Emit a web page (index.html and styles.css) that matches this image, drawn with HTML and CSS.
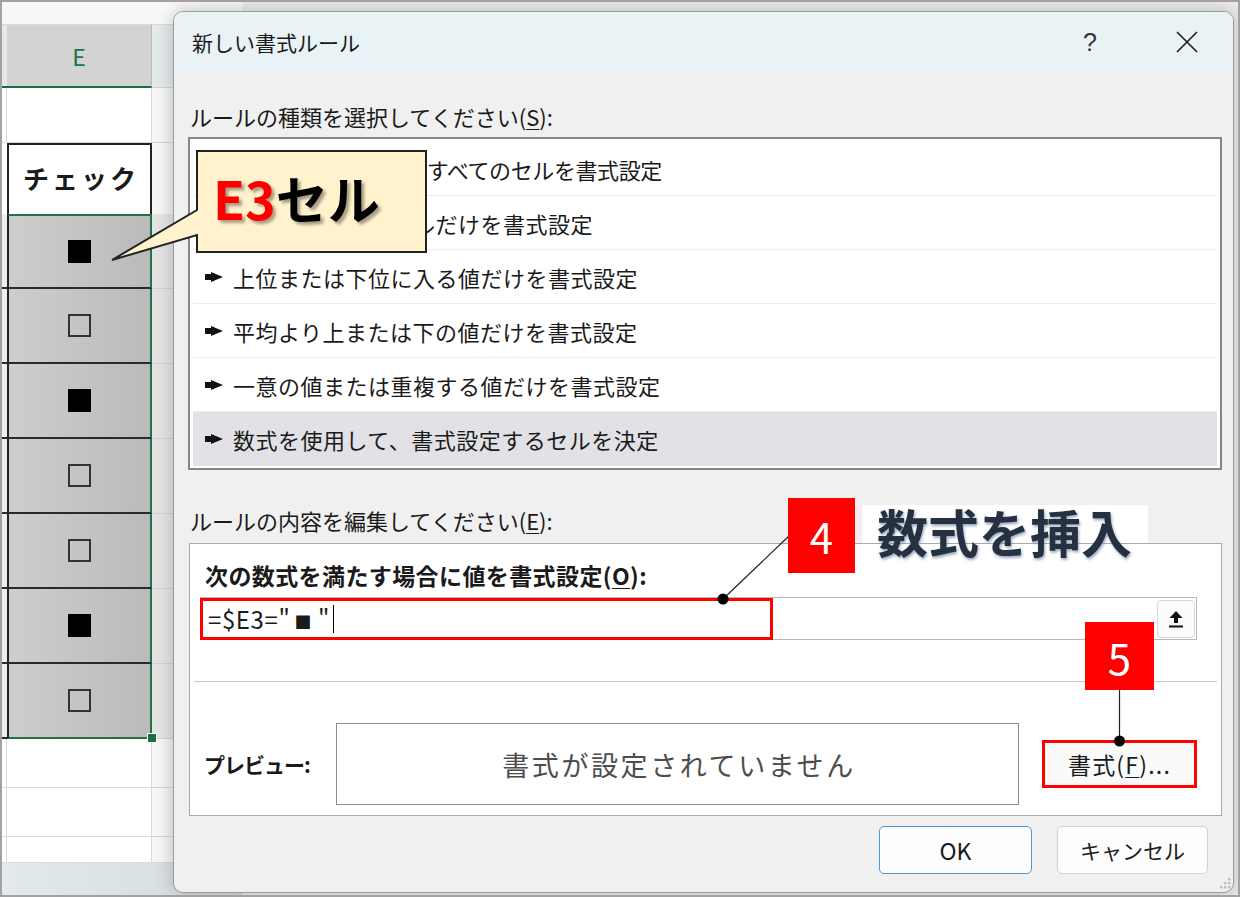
FILE: index.html
```html
<!DOCTYPE html>
<html lang="ja">
<head>
    <meta charset="UTF-8" />
    <title>新しい書式ルール</title>
    <link rel="stylesheet" href="styles.css">
</head>
<body>
<div class="frame">
    <div class="sheet">
        <div class="row top"><div class="stub"></div><div class="cell"></div><div class="next"></div></div>
        <div class="row head"><div class="stub"></div><div class="cell">E</div><div class="next"></div></div>
        <div class="row blank r1"><div class="stub"></div><div class="cell"></div><div class="next"></div></div>
        <div class="row r2"><div class="stub"></div><div class="cell">チェック</div><div class="next"></div></div>
        <div class="row mark first"><div class="stub"></div><div class="cell"><span class="chk on"></span></div><div class="next"></div></div>
        <div class="row mark"><div class="stub"></div><div class="cell"><span class="chk off"></span></div><div class="next"></div></div>
        <div class="row mark"><div class="stub"></div><div class="cell"><span class="chk on"></span></div><div class="next"></div></div>
        <div class="row mark"><div class="stub"></div><div class="cell"><span class="chk off"></span></div><div class="next"></div></div>
        <div class="row mark"><div class="stub"></div><div class="cell"><span class="chk off"></span></div><div class="next"></div></div>
        <div class="row mark"><div class="stub"></div><div class="cell"><span class="chk on"></span></div><div class="next"></div></div>
        <div class="row mark last"><div class="stub"></div><div class="cell"><span class="chk off"></span></div><div class="next"></div></div>
        <div class="row blank r10"><div class="stub"></div><div class="cell"></div><div class="next"></div></div>
        <div class="row blank r11"><div class="stub"></div><div class="cell"></div><div class="next"></div></div>
        <div class="row blank r12"><div class="stub"></div><div class="cell"></div><div class="next"></div></div>
        <div class="row foot"></div>
    </div>
    <div class="handle"></div>

    <div class="dialog">
        <div class="titlebar">
            <div class="title">新しい書式ルール</div>
            <div class="help">?</div>
            <div class="close">
                <svg width="22" height="22" viewBox="0 0 22 22"><path d="M1 1L21 21M21 1L1 21" stroke="#222" stroke-width="1.7"/></svg>
            </div>
        </div>
        <div class="body">
            <div class="label">ルールの種類を選択してください(<u>S</u>):</div>
            <div class="rules">
                <div class="rule tight"><svg class="pt" width="18" height="10" viewBox="0 0 18 10"><polygon points="0,2 6,2 6,0 18,5 6,10 6,8 0,8"/></svg>セルの値に基づいてすべてのセルを書式設定</div>
                <div class="rule"><svg class="pt" width="18" height="10" viewBox="0 0 18 10"><polygon points="0,2 6,2 6,0 18,5 6,10 6,8 0,8"/></svg>指定の値を含むセルだけを書式設定</div>
                <div class="rule"><svg class="pt" width="18" height="10" viewBox="0 0 18 10"><polygon points="0,2 6,2 6,0 18,5 6,10 6,8 0,8"/></svg>上位または下位に入る値だけを書式設定</div>
                <div class="rule"><svg class="pt" width="18" height="10" viewBox="0 0 18 10"><polygon points="0,2 6,2 6,0 18,5 6,10 6,8 0,8"/></svg>平均より上または下の値だけを書式設定</div>
                <div class="rule"><svg class="pt" width="18" height="10" viewBox="0 0 18 10"><polygon points="0,2 6,2 6,0 18,5 6,10 6,8 0,8"/></svg>一意の値または重複する値だけを書式設定</div>
                <div class="rule active"><svg class="pt" width="18" height="10" viewBox="0 0 18 10"><polygon points="0,2 6,2 6,0 18,5 6,10 6,8 0,8"/></svg>数式を使用して、書式設定するセルを決定</div>
            </div>
            <div class="label gap">ルールの内容を編集してください(<u>E</u>):</div>
            <div class="editor">
                <div class="sub">次の数式を満たす場合に値を書式設定(<u>O</u>):</div>
                <div class="formula">
                    <span class="ftext">=$E3="<span class="sq">■</span>"</span><span class="caret"></span>
                    <div class="refbtn">
                        <svg width="16" height="18" viewBox="0 0 16 18"><path d="M8 1L14.5 8H10V13H6V8H1.5Z" fill="#111"/><rect x="1" y="15.5" width="14" height="2" fill="#111"/></svg>
                    </div>
                </div>
                <div class="sep"></div>
                <div class="preview">
                    <div class="plabel">プレビュー:</div>
                    <div class="pbox">書式が設定されていません</div>
                    <div class="fmtbtn">書式(<u>F</u>)...</div>
                </div>
            </div>
            <div class="actions">
                <div class="btn ok">OK</div>
                <div class="btn">キャンセル</div>
            </div>
        </div>
        <svg class="grip" width="14" height="14" viewBox="0 0 14 14">
            <rect x="11" y="3" width="2.5" height="2.5"/><rect x="11" y="7" width="2.5" height="2.5"/><rect x="7" y="7" width="2.5" height="2.5"/>
            <rect x="11" y="11" width="2.5" height="2.5"/><rect x="7" y="11" width="2.5" height="2.5"/><rect x="3" y="11" width="2.5" height="2.5"/>
        </svg>
    </div>

    <svg class="marks" width="1236" height="893" viewBox="2 2 1236 893">
        <path d="M197 151H426V252H197V235L112 260L197 210Z" fill="#fff2cc" stroke="#222" stroke-width="2"/>
        <line x1="723" y1="599" x2="789" y2="536" stroke="#222" stroke-width="1.2"/>
        <line x1="1119.5" y1="690" x2="1119.5" y2="741" stroke="#222" stroke-width="1.2"/>
        <rect x="201.5" y="599.5" width="570" height="39" fill="none" stroke="#ff0000" stroke-width="3"/>
        <rect x="1043.5" y="741.5" width="152" height="45" fill="none" stroke="#ff0000" stroke-width="3"/>
        <circle cx="723" cy="599" r="5.5" fill="#000"/>
        <circle cx="1119.5" cy="741" r="5.5" fill="#000"/>
    </svg>
    <div class="callout"><span class="red">E3</span>セル</div>
    <div class="badge b4">4</div>
    <div class="note">数式を挿入</div>
    <div class="badge b5">5</div>
</div>
</body>
</html>
```

FILE: styles.css
```css
* {
    margin: 0;
    padding: 0;
    box-sizing: border-box;
}
html, body {
    background: #fff;
}
body {
    font-family: "Noto Sans CJK JP", "Noto Sans", sans-serif;
    color: #1a1a1a;
}
u {
    text-decoration-thickness: 1px;
    text-underline-offset: 3px;
}
.frame {
    position: relative;
    width: 1240px;
    height: 897px;
    border: 2px solid #a2a2a2;
    background: #ececec;
    overflow: hidden;
}

/* シート */
.sheet {
    width: 240px;
    height: 893px;
    display: flex;
    flex-direction: column;
    background: #fff;
}
.row {
    display: flex;
    flex: none;
}
.stub {
    width: 5px;
    flex: none;
}
.cell {
    width: 145px;
    flex: none;
    display: flex;
    align-items: center;
    justify-content: center;
}
.next {
    flex: 1;
}
.top {
    height: 23px;
    background: #f8f8f8;
    border-bottom: 1px solid #d9d9d9;
}
.head {
    height: 63px;
}
.head .stub, .head .next {
    background: #e4e9ec;
}
.head .stub {
    border-bottom: 2px solid #1d6f42;
}
.head .cell {
    background: #d3d3d3;
    color: #217346;
    font-size: 23px;
    border-bottom: 2px solid #1d6f42;
    border-right: 1px solid #bababa;
}
.head .next {
    border-bottom: 1px solid #cdd2d5;
}
.blank .stub {
    border-right: 1px solid #d9d9d9;
    border-bottom: 1px solid #dcdcdc;
}
.blank .cell {
    border-right: 1px solid #d9d9d9;
    border-bottom: 1px solid #dcdcdc;
}
.blank .next {
    background: linear-gradient(90deg, #f7f7f7, #e2e2e2);
    border-bottom: 1px solid #d6d6d6;
}
.r1 { height: 55px; }
.r2 { height: 71px; }
.r2 .next {
    background: linear-gradient(90deg, #f7f7f7, #e2e2e2);
}
.r2 .cell {
    border: 2px solid #222;
    border-bottom: none;
    font-weight: 700;
    font-size: 26px;
    letter-spacing: 3px;
    padding: 0 0 4px 3px;
}
.mark {
    height: 75px;
}
.mark .stub {
    background: #efefef;
    border-bottom: 2px solid #2a2a2a;
}
.mark .cell {
    background: linear-gradient(90deg, #cecece, #bababa);
    border-left: 2px solid #222;
    border-right: 2px solid #217346;
    border-bottom: 2px solid #2a2a2a;
}
.mark.first .cell {
    border-top: 2px solid #217346;
}
.mark.last .cell {
    border-bottom: 2px solid #217346;
}
.mark .next {
    background: #e3e3e3;
    border-bottom: 1px solid #d2d2d2;
}
.chk {
    width: 23px;
    height: 23px;
}
.chk.on {
    background: #000;
}
.chk.off {
    border: 2px solid #333;
}
.r10, .r11 { height: 49px; }
.r12 { height: 26px; }
.foot {
    height: 32px;
    background: linear-gradient(90deg, #e3eaec, #d2dbde);
}
.handle {
    position: absolute;
    left: 145px;
    top: 731px;
    width: 10px;
    height: 10px;
    background: #1d6f42;
    border: 1px solid #fff;
}

/* ダイアログ */
.dialog {
    position: absolute;
    left: 171px;
    top: 9px;
    width: 1061px;
    height: 882px;
    border: 1px solid #9c9c9c;
    border-radius: 10px;
    background: #f0f0f0;
    overflow: hidden;
    box-shadow: 0 0 18px rgba(0, 0, 0, 0.22);
    display: flex;
    flex-direction: column;
}
.titlebar {
    height: 60px;
    flex: none;
    background: #e9f3f6;
    display: flex;
    align-items: center;
    padding-left: 18px;
}
.title {
    flex: 1;
    font-size: 21px;
}
.help {
    width: 40px;
    text-align: center;
    font-family: "Liberation Sans", sans-serif;
    font-size: 25px;
    color: #333;
}
.close {
    width: 40px;
    height: 40px;
    margin-left: 57px;
    margin-right: 26px;
    display: flex;
    align-items: center;
    justify-content: center;
}
.body {
    padding: 29px 11px 0 15px;
    display: flex;
    flex-direction: column;
}
.label {
    font-size: 22px;
    line-height: 30px;
    padding-left: 1px;
    margin-bottom: 6px;
}
.label.gap {
    margin-top: 35px;
    margin-bottom: 8px;
}
.rules {
    margin-left: -1px;
    height: 333px;
    border: 2px solid #858585;
    background: #fff;
    padding: 3px;
}
.rule {
    height: 54px;
    display: flex;
    align-items: center;
    padding-left: 12px;
    border-bottom: 1px solid #ededed;
    font-size: 22px;
    letter-spacing: 0.5px;
}
.rule.tight {
    letter-spacing: -0.4px;
}
.rule.active {
    background: #e1e1e6;
    border-bottom: none;
}
.pt {
    margin-right: 10px;
    fill: #111;
}
.editor {
    height: 273px;
    border: 1px solid #aaaaaa;
    background: #fff;
    display: flex;
    flex-direction: column;
}
.sub {
    margin-top: 16px;
    line-height: 30px;
    padding-left: 15px;
    font-weight: 700;
    font-size: 23px;
    letter-spacing: 0.4px;
}
.formula {
    margin: 7px 24px 0 10px;
    height: 43px;
    border: 1px solid #b8b8b8;
    display: flex;
    align-items: center;
    padding-left: 7px;
    font-size: 24px;
    letter-spacing: 0.6px;
}
.sq {
    font-size: 17px;
    margin: 0 6px 0 4px;
}
.caret {
    width: 1px;
    height: 28px;
    background: #000;
    margin-left: 3px;
}
.refbtn {
    margin-left: auto;
    margin-right: 1px;
    width: 38px;
    height: 38px;
    border: 1px solid #d8d8d8;
    border-radius: 4px;
    background: #fbfbfb;
    display: flex;
    align-items: center;
    justify-content: center;
}
.sep {
    margin: 41px 4px 0;
    height: 1px;
    background: #c9c9c9;
}
.preview {
    margin-top: 41px;
    height: 82px;
    display: flex;
    align-items: center;
}
.plabel {
    width: 146px;
    padding-left: 14px;
    font-weight: 700;
    font-size: 21px;
    letter-spacing: -1px;
}
.pbox {
    width: 683px;
    height: 82px;
    border: 1px solid #8c8c8c;
    display: flex;
    align-items: center;
    justify-content: center;
    padding-left: 3px;
    font-size: 27px;
    letter-spacing: 2.6px;
    color: #4d4d4d;
}
.fmtbtn {
    margin-left: 23px;
    width: 155px;
    height: 48px;
    display: flex;
    align-items: center;
    justify-content: center;
    font-size: 23px;
    letter-spacing: 1.2px;
    background: #fafafa;
}
.actions {
    margin-top: 10px;
    display: flex;
    justify-content: flex-end;
    gap: 25px;
    padding-right: 14px;
}
.btn {
    width: 151px;
    height: 48px;
    border: 1px solid #d1d1d1;
    border-radius: 5px;
    background: #fdfdfd;
    display: flex;
    align-items: center;
    justify-content: center;
    font-size: 21px;
}
.btn.ok {
    width: 153px;
    border-color: #4b98e0;
    font-size: 23px;
}
.grip {
    position: absolute;
    right: 2px;
    bottom: 3px;
    fill: #bdbdbd;
}

/* 注釈 */
.marks {
    position: absolute;
    left: 0;
    top: 0;
}
.callout {
    position: absolute;
    left: 195px;
    top: 148px;
    width: 229px;
    height: 104px;
    padding: 0 0 8px 16px;
    display: flex;
    align-items: center;
    font-size: 52px;
    font-weight: 700;
    line-height: 1;
    color: #000;
    text-shadow: 3px 3px 3px rgba(0, 0, 0, 0.35);
}
.red {
    color: #ff0000;
}
.badge {
    position: absolute;
    background: #ff0000;
    color: #fff;
    font-size: 42px;
    display: flex;
    align-items: center;
    justify-content: center;
}
.b4 {
    left: 786px;
    top: 496px;
    width: 67px;
    height: 75px;
}
.b5 {
    left: 1083px;
    top: 620px;
    width: 69px;
    height: 68px;
}
.note {
    position: absolute;
    left: 860px;
    top: 503px;
    width: 286px;
    height: 38px;
    background: #fff;
    padding-left: 15px;
    font-size: 51px;
    font-weight: 700;
    line-height: 52px;
    color: #253141;
    white-space: nowrap;
    text-shadow: 1px 2px 3px rgba(110, 130, 160, 0.7);
}
```
